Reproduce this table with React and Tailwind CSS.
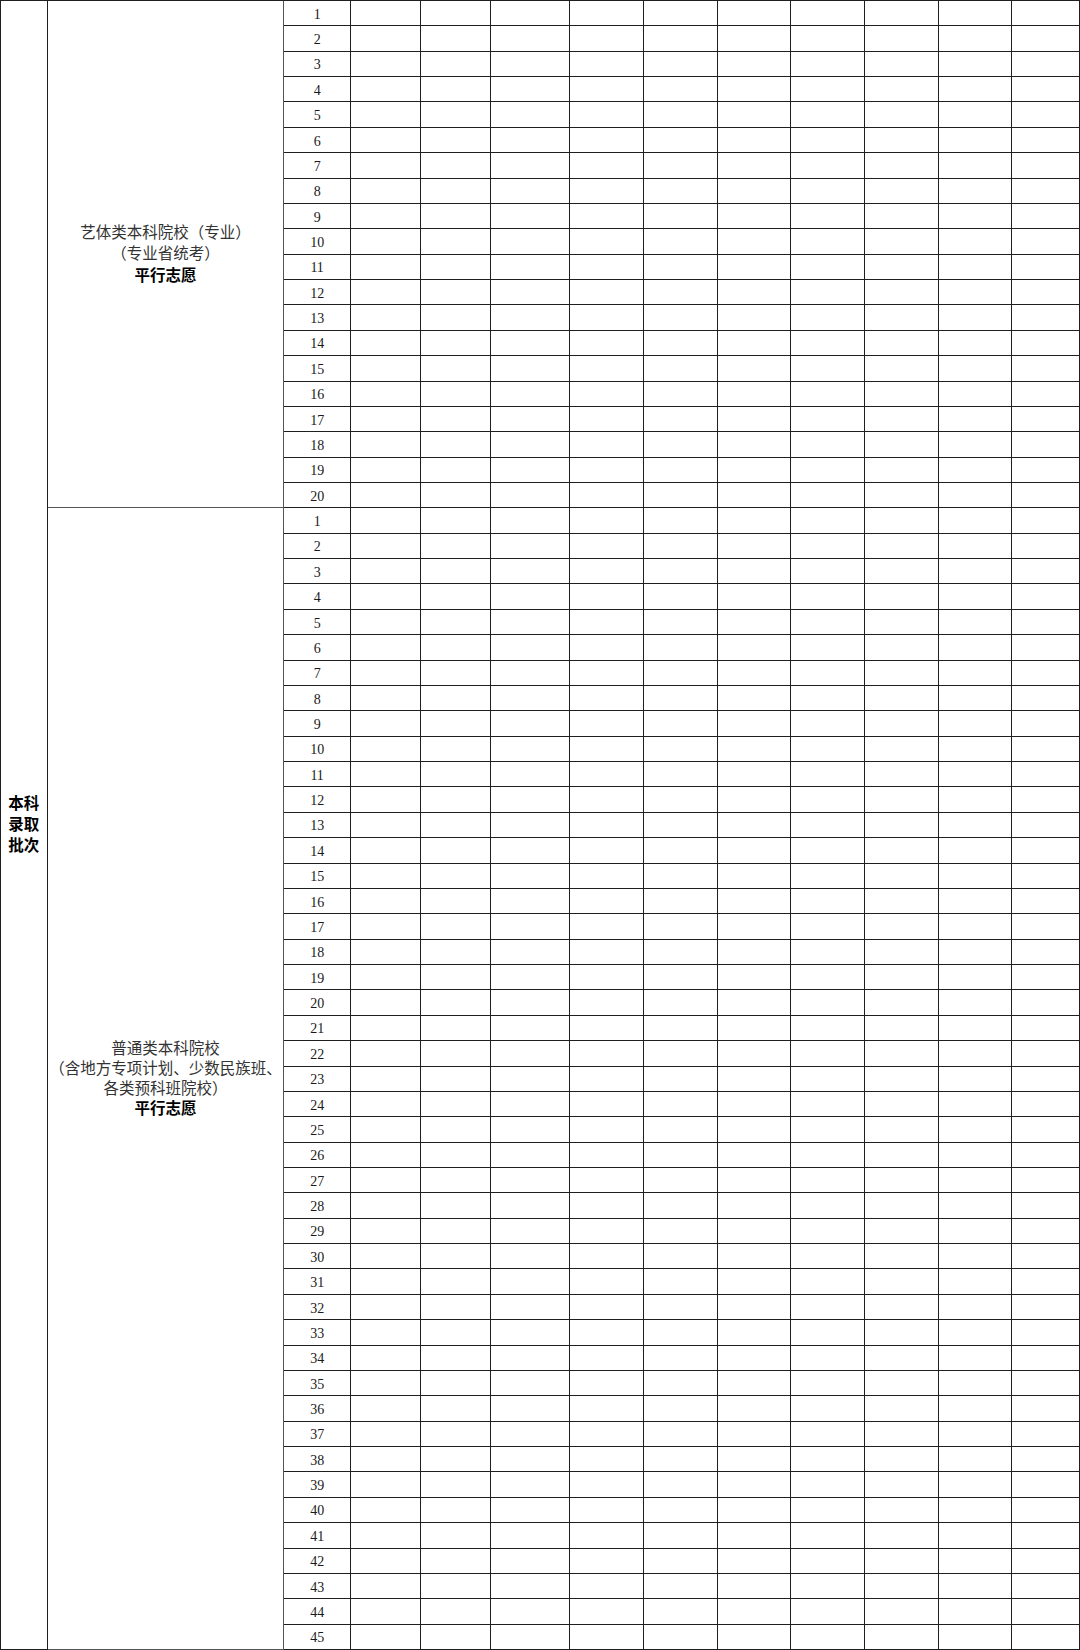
// 本科录取批次 volunteer form sheet

const FIRST_GROUP = 20;
const SECOND_GROUP = 45;
const EMPTY_COLUMNS = 10;

function NumberRow({ n }) {
  return (
    <>
      <div className="flex items-center justify-center border-r border-b border-[#1f1f1f] pt-[3px] text-[14px] leading-none text-[#1a1a1a]">
        {n}
      </div>
      {Array.from({ length: EMPTY_COLUMNS }).map((_, i) => (
        <div key={i} className="border-r border-b border-[#1f1f1f]" />
      ))}
    </>
  );
}

export default function App() {
  const first = Array.from({ length: FIRST_GROUP }, (_, i) => i + 1);
  const second = Array.from({ length: SECOND_GROUP }, (_, i) => i + 1);

  return (
    <div
      className="w-[1080px] h-[1650px] bg-white [text-spacing-trim:space-all]"
      style={{ fontFamily: '"Liberation Serif", "Noto Sans CJK SC", serif' }}
    >
      <div className="grid h-[1650px] w-[1080px] grid-cols-[46.7px_236.6px_66.7px_70.5px_69.5px_79.4px_73.6px_73.8px_73.6px_73.2px_74px_73.7px_1fr] grid-rows-[repeat(65,minmax(0,1fr))] border-t border-l border-[#1f1f1f]">
        {/* batch label */}
        <div className="col-[1] row-[1/66] flex items-center justify-center border-r border-b border-[#1f1f1f] text-center text-[15.5px] font-bold leading-[21px] text-black">
          本科
          <br />
          录取
          <br />
          批次
        </div>

        {/* art & sports */}
        <div className="col-[2] row-[1/21] flex flex-col items-center justify-center border-r border-b border-[#555] text-center text-[15.5px] leading-[21.5px] text-[#333]">
          <span>艺体类本科院校（专业）</span>
          <span>（专业省统考）</span>
          <span className="font-bold text-black">平行志愿</span>
        </div>

        {/* general */}
        <div className="col-[2] row-[21/66] flex flex-col items-center justify-center border-r border-b border-[#555] text-center text-[15.5px] leading-[20px] text-[#333]">
          <span>普通类本科院校</span>
          <span className="whitespace-nowrap">（含地方专项计划、少数民族班、</span>
          <span>各类预科班院校）</span>
          <span className="font-bold text-black">平行志愿</span>
        </div>

        {first.map((n) => (
          <NumberRow key={`a${n}`} n={n} />
        ))}
        {second.map((n) => (
          <NumberRow key={`b${n}`} n={n} />
        ))}
      </div>
    </div>
  );
}
